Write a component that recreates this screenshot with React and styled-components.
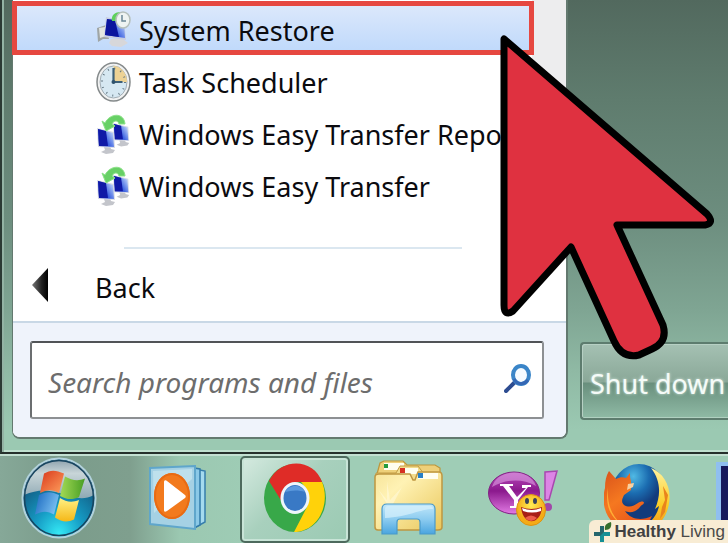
import React from "react";
import styled, { createGlobalStyle, css } from "styled-components";

const GlobalStyle = createGlobalStyle`
  *, *::before, *::after { box-sizing: border-box; }
  body { margin: 0; overflow: hidden; }
  button, input { font: inherit; color: inherit; margin: 0; }
`;

const Desktop = styled.div`
  position: relative;
  display: flex;
  flex-direction: column;
  min-height: 100vh;
  overflow: hidden;
  font-family: "Noto Sans", "Open Sans", sans-serif;
  font-size: 27px;
  color: #0b0b0f;
  background: #9fcdb6;
`;

const StartMenu = styled.main`
  display: flex;
  flex: 1;
  padding: 0 0 13px 10px;
  border-left: 2px solid #2b3a34;
  border-bottom: 2px solid #26302c;
  box-shadow: inset 2px 0 0 #93b3a4, inset 0 -2px 0 #bfe0cf;
  background: linear-gradient(#52695e 0, #5f7c6e 100px, #6d8e7f 220px, #7fa593 310px, #8fb9a4 370px, #9bc9b2 430px);
`;

const Programs = styled.section`
  display: flex;
  flex-direction: column;
  flex: 1;
  min-width: 0;
  border: solid #63796f;
  border-width: 0 2px 2px 1px;
  border-radius: 0 0 8px 8px;
  background: #fff;
  overflow: hidden;
`;

const ListArea = styled.div`
  display: flex;
  justify-content: space-between;
  height: 247px;
`;

const ProgramList = styled.ul`
  display: flex;
  flex-direction: column;
  gap: 2px;
  flex: 1;
  min-width: 0;
  margin: 0;
  padding: 5px 0 0;
  list-style: none;
`;

const ScrollTrack = styled.div`
  width: 34px;
  height: 150px;
  background: #ededee;
`;

const ProgramButton = styled.button`
  display: flex;
  align-items: center;
  gap: 8px;
  width: 100%;
  height: 50px;
  padding: 0 0 0 83px;
  border: 0;
  background: ${(p) => (p.$selected ? "linear-gradient(#dce8fb, #bdd8fb)" : "none")};
  white-space: nowrap;
  text-align: left;
  line-height: 50px;

  svg { flex: none; }
`;

const ProgramName = styled.span`
  padding-top: 2px;
`;

const Separator = styled.hr`
  width: 338px;
  height: 2px;
  margin: 0 0 0 111px;
  border: 0;
  background: #dbe7f0;
`;

const BackButton = styled.button`
  display: flex;
  align-items: center;
  gap: 46px;
  flex: 1;
  padding: 0 0 0 19px;
  border: 0;
  background: none;
  text-align: left;
`;

const BackLabel = styled.span`
  padding-top: 4px;
`;

const SearchFooter = styled.form`
  padding: 18px 22px 18px 17px;
  border-top: 2px solid #c9d8e6;
  background: #eff3fb;
`;

const SearchBox = styled.label`
  display: flex;
  align-items: center;
  height: 78px;
  padding: 0 11px 4px 16px;
  border: 2px solid #8d9093;
  border-top-color: #515457;
  border-left-color: #6b6e70;
  border-radius: 3px;
  background: #fff;
`;

const SearchInput = styled.input`
  flex: 1;
  min-width: 0;
  padding: 8px 0 0;
  border: 0;
  outline: 0;
  background: none;
  font-size: 28px;
  &::placeholder { color: #6d6d6d; font-style: italic; opacity: 1; }
`;

const SidePane = styled.aside`
  display: flex;
  align-items: flex-end;
  width: 160px;
  padding: 0 0 19px 12px;
`;

const ShutDownButton = styled.button`
  flex: 1;
  height: 78px;
  padding: 4px 0 0 8px;
  border: 2px solid #5d7c6e;
  border-right: 0;
  border-radius: 4px 0 0 4px;
  box-shadow: inset 1px 1px 0 #b7d0c4, inset 0 -1px 0 #b0d0c0;
  background: linear-gradient(#a5c1b3 0%, #8aa898 51%, #698f7d 53%, #8fbaa5 100%);
  color: #f5fbf8;
  text-align: left;
  white-space: nowrap;
  text-shadow: 0 0 3px #d7ebe1;
`;

const Taskbar = styled.nav`
  display: flex;
  height: 89px;
  border-top: 2px solid #c3e0d2;
  background: linear-gradient(90deg, #86a898 0, #7b9c8b 60px, #7f9f8e 130px, #9bc8b1 180px, #9fcdb6 260px);
`;

const TaskSlot = styled.button`
  display: flex;
  align-items: center;
  justify-content: center;
  flex: none;
  width: ${(p) => p.$width || 110}px;
  margin: 0 ${(p) => (p.$width ? 0 : 2)}px;
  padding: 0 0 4px;
  border: 2px solid transparent;
  background: none;

  ${(p) => p.$active && css`
    border-color: #4d6a5d;
    border-radius: 5px;
    box-shadow: inset 0 0 0 2px #c8e4d7;
    background: linear-gradient(135deg, #d5eae0 0%, #a8d0bd 45%, #9bcab3 100%);
  `}
`;

const WindowThumb = styled.div`
  flex: 1;
  height: 70px;
  margin: 6px 0 0 22px;
  border: solid #8fbff0;
  border-width: 4px 0 4px 5px;
  background: #17195c;
`;

const Highlight = styled.div`
  position: absolute;
  top: 1px;
  left: 12px;
  right: 194px;
  height: 54px;
  border: 5px solid #e64840;
`;

const Pointer = styled.svg`
  position: absolute;
  top: 30px;
  right: 8px;
`;

const Watermark = styled.div`
  position: absolute;
  right: 0;
  bottom: 0;
  display: flex;
  align-items: center;
  gap: 2px;
  height: 23px;
  padding: 0 3px 0 4px;
  border-radius: 6px 0 0 0;
  background: #f8ecd4;
  color: #4a4a48;
  font: 17px/23px "Liberation Sans", Arial, sans-serif;
  white-space: nowrap;
`;

const Brand = styled.strong`
  font-weight: 700;
  color: #3f4142;
`;

const GradientDefs = styled.svg`
  position: absolute;
`;

const Screen = ({ x, y, s = 1 }) => (
  <g transform={`translate(${x} ${y}) scale(${s})`}>
    <path d="M7 18l6-1 1 3 4 1-2 3-7 1-5-2 4-2z" fill="#c3c5cb" />
    <path d="M0-1L17 3l1 16L1 18z" fill="#d8dbe6" />
    <path d="M1 0l15 4 1 14-15-1z" fill="url(#screenBlue)" />
    <path d="M1 0l8 2 2 15-9 0z" fill="#1019a6" />
  </g>
);

const RestoreIcon = () => (
  <svg width="35" height="38" viewBox="0 0 35 38" aria-hidden="true">
    <path d="M1 17l9-3 3 14-6 0-5 3z" fill="#9fa5a5" />
    <path d="M3 17l6-1 1 9-6 2z" fill="#e3e6e1" />
    <path d="M15 28h12l5 4-7 4-9-1-3-3z" fill="#d7d7da" />
    <path d="M10 6l18 4 2 19-22-3z" fill="#c8cde0" />
    <path d="M11 8l17 3 1 16-20-3z" fill="url(#screenBlue)" />
    <path d="M11 8l8 1 4 17-14-2z" fill="#0b149d" />
    <path d="M16 10c-1-6 3-9 9-9v4c-3 0-5 2-4 5z" fill="#5ed15d" />
    <ellipse cx="27" cy="9" rx="7" ry="8" fill="#eef3f2" stroke="#b5bfbb" strokeWidth="1.5" />
    <path d="M26 4v6h4" fill="none" stroke="#698796" strokeWidth="1.5" />
  </svg>
);

const ClockIcon = () => (
  <svg width="35" height="40" viewBox="0 0 35 40" aria-hidden="true">
    <ellipse cx="17.5" cy="20" rx="16.5" ry="19" fill="#f0f1f1" stroke="#858a8b" strokeWidth="1.5" />
    <ellipse cx="17.5" cy="20" rx="13.5" ry="16" fill="#d6e8f2" stroke="#a2adb4" />
    <path d="M17.5 20V4A13.5 16 0 0 1 31 20z" fill="#edd294" />
    <ellipse cx="17.5" cy="20" rx="11.5" ry="13.5" fill="none" stroke="#667984" strokeWidth="2" strokeDasharray="1 5.6" />
    <path d="M17.5 6v14h9" fill="none" stroke="#3d6078" strokeWidth="2.2" />
    <circle cx="17.5" cy="20" r="2" fill="#2f526c" />
  </svg>
);

const TransferIcon = () => (
  <svg width="35" height="40" viewBox="0 0 35 40" aria-hidden="true">
    <Screen x="17" y="10" s="0.9" />
    <Screen x="1" y="15" />
    <path d="M6 7l3 2C14-1 28-2 29 10l-6 0c-1-4-5-4-7 0l3 2-9 5z" fill="#68d066" stroke="#8be187" strokeWidth="1" />
  </svg>
);

const BackArrow = () => (
  <svg width="17" height="35" viewBox="0 0 17 35" aria-hidden="true">
    <defs>
      <linearGradient id="arrow" x1="0" x2="1">
        <stop stopColor="#777" /><stop offset="0.6" stopColor="#222" /><stop offset="1" stopColor="#000" />
      </linearGradient>
    </defs>
    <path d="M16 0v34L0 17z" fill="url(#arrow)" />
  </svg>
);

const SearchIcon = () => (
  <svg width="27" height="29" viewBox="0 0 27 29" aria-hidden="true">
    <path d="M11 18L2 27" stroke="#2d4c91" strokeWidth="4" strokeLinecap="round" />
    <ellipse cx="17" cy="11" rx="8" ry="9" fill="#f4faff" stroke="#3a85c8" strokeWidth="4" />
    <path d="M10 15c3 6 10 6 14 1" stroke="#3567b5" strokeWidth="3" fill="none" />
  </svg>
);

const SharedGradients = () => (
  <GradientDefs width="0" height="0" aria-hidden="true">
    <defs>
      <linearGradient id="screenBlue" x1="0" y1="1" x2="1" y2="0.3">
        <stop stopColor="#1421b5" /><stop offset="0.5" stopColor="#3a5fe0" /><stop offset="1" stopColor="#b9d0fa" />
      </linearGradient>
    </defs>
  </GradientDefs>
);

const StartOrb = () => (
  <svg width="76" height="82" viewBox="0 0 76 84" preserveAspectRatio="none" aria-hidden="true">
    <defs>
      <radialGradient id="orb" cx="0.5" cy="0.95" r="0.75">
        <stop stopColor="#35e9f5" /><stop offset="0.45" stopColor="#159bc4" /><stop offset="1" stopColor="#12577e" />
      </radialGradient>
      <linearGradient id="orbTop" x2="0" y2="1">
        <stop stopColor="#8fa3ae" /><stop offset="0.35" stopColor="#c8d5d8" /><stop offset="1" stopColor="#8fa9b4" />
      </linearGradient>
      <linearGradient id="flagR" x2="1" y2="1"><stop stopColor="#d8371b" /><stop offset="1" stopColor="#ffa15e" /></linearGradient>
      <linearGradient id="flagG" x2="1"><stop stopColor="#a4da55" /><stop offset="1" stopColor="#489e24" /></linearGradient>
      <linearGradient id="flagB" x2="1" y2="0.4"><stop stopColor="#1765bd" /><stop offset="1" stopColor="#76bdf0" /></linearGradient>
      <linearGradient id="flagY" x2="0" y2="1"><stop stopColor="#fff184" /><stop offset="1" stopColor="#f5b717" /></linearGradient>
    </defs>
    <ellipse cx="38" cy="42" rx="36.5" ry="40.5" fill="url(#orb)" stroke="#b2d2dc" strokeWidth="2" />
    <path d="M3 39C5 17 19 3 38 3s33 14 35 36c-13 7-22 1-34-2-13-4-23-4-36 2z" fill="url(#orbTop)" />
    <ellipse cx="38" cy="42" rx="34.5" ry="38.5" fill="none" stroke="#17445f" strokeWidth="1.5" />
    <path d="M23 17c6-4 12-4 20 0l-5 20c-6-4-12-4-19 0z" fill="url(#flagR)" />
    <path d="M44 20c7 4 13 5 20 2l-6 19c-6 3-12 3-19-1z" fill="url(#flagG)" />
    <path d="M18 39c7-4 13-4 20 0l-5 20c-6-4-12-4-19 0z" fill="url(#flagB)" />
    <path d="M39 42c6 4 12 5 19 2l-5 20c-6 3-12 3-19-2z" fill="url(#flagY)" />
  </svg>
);

const MediaIcon = () => (
  <svg width="58" height="66" viewBox="0 0 58 66" aria-hidden="true">
    <path d="M46 4l10 2v51l-9 5z" fill="#a5daef" stroke="#377eac" strokeWidth="1.5" />
    <path d="M45 3l6 1v56l-6 3z" fill="#8bc9e7" stroke="#327ba9" strokeWidth="1.5" />
    <path d="M1 3l45-2v63L1 59z" fill="#a5d1e4" stroke="#5fa6cb" strokeWidth="2" />
    <path d="M4 6l39-2v10L5 48z" fill="#c9e7ef" opacity="0.7" />
    <ellipse cx="23" cy="31" rx="18" ry="23" fill="#f27a1d" />
    <ellipse cx="23" cy="31" rx="17" ry="22" fill="none" stroke="#e86b13" strokeWidth="2" />
    <path d="M15 17c0-2 2-2 3-1l18 14c1 1 1 2 0 3L18 46c-2 1-3 1-3-1z" fill="#fff" />
  </svg>
);

const ChromeIcon = () => (
  <svg width="62" height="70" viewBox="0 0 62 70" aria-hidden="true">
    <ellipse cx="31" cy="35" rx="31" ry="34" fill="#38a849" />
    <path d="M5 18C17-6 50-5 58 19H31L18 39z" fill="#df2c27" />
    <path d="M58 19c9 22-4 50-28 50l13-25c3-8 1-18-6-25z" fill="#ffd20a" />
    <ellipse cx="31" cy="35" rx="14.5" ry="16" fill="#eef5fa" />
    <ellipse cx="31" cy="35" rx="11.5" ry="13" fill="#3979c5" />
    <path d="M21 29c4-7 15-9 20 0-6-2-13-2-20 0z" fill="#5c9ade" />
  </svg>
);

const ExplorerIcon = () => (
  <svg width="70" height="76" viewBox="0 0 70 76" aria-hidden="true">
    <defs>
      <linearGradient id="folder" x2="1" y2="1"><stop stopColor="#f7e49a" /><stop offset="0.3" stopColor="#fff2b4" /><stop offset="1" stopColor="#e9c75b" /></linearGradient>
      <linearGradient id="stand" x2="0" y2="1"><stop stopColor="#c2e8fa" /><stop offset="0.5" stopColor="#8dccf0" /><stop offset="1" stopColor="#4aa5df" /></linearGradient>
    </defs>
    <path d="M3 14l3-11 4-2h19l4 4h28l5 3v16H3z" fill="#eed079" stroke="#bd963b" strokeWidth="1.2" />
    <path d="M10 3h20v7H10z" fill="#fffef0" /><path d="M10 4h4v4h-4z" fill="#269b3e" />
    <path d="M2 13h20l4-7h18l6 8h17v13H2z" fill="#f2dc8c" stroke="#c29d46" strokeWidth="1" />
    <path d="M27 8h17v6H26z" fill="#fffef0" /><path d="M26 8h5v5h-5z" fill="#d62f22" />
    <path d="M1 17c0-2 2-3 4-3h31l3 6h2l3-8h21c2 0 3 2 3 4v51c0 2-2 3-4 3H4c-2 0-3-1-3-3z" fill="url(#folder)" stroke="#bf9640" strokeWidth="1.5" />
    <path d="M45 13h19v6H44z" fill="#fffef0" /><path d="M44 13h5v5h-5z" fill="#287fc6" />
    <path d="M13 44l-9-15 9 11V21l3 19 12-13-9 17 18-1-18 5z" fill="#fffce1" opacity="0.5" />
    <path d="M8 49c0-3 2-5 5-5h43c3 0 5 2 5 5v25H46V62c0-2-1-3-3-3H26c-2 0-3 1-3 3v12H8z" fill="url(#stand)" stroke="#4899ca" strokeWidth="1.2" />
    <path d="M11 49c0-2 1-3 3-3h41c3 0 4 1 4 3-13 0-25 8-48 9z" fill="#d7f1fc" opacity="0.7" />
  </svg>
);

const MessengerIcon = () => (
  <svg width="70" height="58" viewBox="0 0 70 58" aria-hidden="true">
    <defs>
      <linearGradient id="purple" x2="0" y2="1"><stop stopColor="#b84abb" /><stop offset="0.45" stopColor="#8b198d" /><stop offset="1" stopColor="#e27be4" /></linearGradient>
      <radialGradient id="smile" cy="0.35"><stop stopColor="#ffed55" /><stop offset="1" stopColor="#f4ab17" /></radialGradient>
    </defs>
    <ellipse cx="26" cy="24" rx="25.5" ry="21" fill="url(#purple)" stroke="#812483" />
    <path d="M4 18C9-1 42-1 48 17 34 9 18 10 4 18z" fill="#dda0e3" opacity="0.6" />
    <path d="M12 15h13v2h-4l8 11 9-9h-4v-3h9v2h-3L30 31v6h5v2H22v-2h4v-6L15 17h-3z" fill="#fff" />
    <path d="M57 3l12-1-8 29h-4z" fill="#dc85e5" stroke="#a848af" strokeWidth="1.5" />
    <ellipse cx="60" cy="38" rx="4" ry="4" fill="#a147a8" />
    <ellipse cx="43" cy="41" rx="14.5" ry="15.5" fill="url(#smile)" stroke="#dc9413" />
    <ellipse cx="39" cy="32" rx="2" ry="3" fill="#384259" /><ellipse cx="47" cy="32" rx="2" ry="3" fill="#384259" />
    <path d="M33 38q10 4 21 0c-1 18-19 20-21 0z" fill="#a81f17" />
    <path d="M34 39q10 4 19 0v3q-9 3-18 0z" fill="#fff" />
    <path d="M37 49q6-5 12 0-6 6-12 0z" fill="#ed5c49" />
  </svg>
);

const FirefoxIcon = () => (
  <svg width="66" height="70" viewBox="0 0 66 70" aria-hidden="true">
    <defs>
      <radialGradient id="globe" cx="0.4" cy="0.2"><stop stopColor="#50b9e4" /><stop offset="0.55" stopColor="#1b6cb0" /><stop offset="1" stopColor="#133b7c" /></radialGradient>
      <linearGradient id="fox" x2="0.6" y2="1"><stop stopColor="#d8531b" /><stop offset="0.5" stopColor="#f57820" /><stop offset="1" stopColor="#e8541a" /></linearGradient>
      <linearGradient id="tail" x2="0" y2="1"><stop stopColor="#fff3a0" /><stop offset="0.6" stopColor="#fbcb22" /><stop offset="1" stopColor="#ef861b" /></linearGradient>
    </defs>
    <ellipse cx="35" cy="32" rx="28" ry="31" fill="url(#globe)" />
    <path d="M47 5c15 6 22 23 17 40-4 15-16 24-31 24 12-8 20-15 22-26l-4 3c6-14 6-28-4-41z" fill="url(#tail)" />
    <path d="M59 23l5 9-3 17-5 7 2-12 3-7z" fill="#e9841c" />
    <path d="M5 8l7 8c4-2 7-2 10-1l4-5c0 4 0 6 1 8v9l-7 5c-3 6-2 8 0 10 5 3 10 1 14-2 3-2 6-2 6 0-1 2-3 2-4 4-5 6-11 6-15 4 6 9 17 10 27 5-4 9-11 13-20 13C8 68-5 47 1 25c0-7 1-12 4-17z" fill="url(#fox)" />
    <path d="M24 21l6-1-1 4-6 3z" fill="#f8d0a0" />
    <path d="M4 24c-3 17 1 29 14 38C6 51 3 39 4 24z" fill="#ffad35" />
  </svg>
);

const PlusLeaf = () => (
  <svg width="19" height="20" viewBox="0 0 19 20" aria-hidden="true">
    <path d="M7 4h4v6h6v4h-6v6H7v-6H1v-4h6z" fill="#158f95" />
    <path d="M7 4h4v6l-4 4H1v-4h6z" fill="#25666c" />
    <path d="M12 8c-1-5 2-7 6-8 1 5-1 8-6 8z" fill="#356e2b" />
  </svg>
);

const programs = [
  { name: "System Restore", Icon: RestoreIcon, selected: true },
  { name: "Task Scheduler", Icon: ClockIcon },
  { name: "Windows Easy Transfer Repo", Icon: TransferIcon },
  { name: "Windows Easy Transfer", Icon: TransferIcon },
];

const tasks = [
  { name: "Start", Icon: StartOrb, width: 118 },
  { name: "Media Player", Icon: MediaIcon, width: 120 },
  { name: "Chrome", Icon: ChromeIcon, active: true },
  { name: "Explorer", Icon: ExplorerIcon },
  { name: "Messenger", Icon: MessengerIcon },
  { name: "Firefox", Icon: FirefoxIcon },
];

export default function App() {
  return (
    <Desktop>
      <GlobalStyle />
      <SharedGradients />
      <StartMenu>
        <Programs>
          <ListArea>
            <ProgramList>
              {programs.map(({ name, Icon, selected }) => (
                <li key={name}>
                  <ProgramButton type="button" $selected={selected}>
                    <Icon />
                    <ProgramName>{name}</ProgramName>
                  </ProgramButton>
                </li>
              ))}
            </ProgramList>
            <ScrollTrack />
          </ListArea>
          <Separator />
          <BackButton type="button">
            <BackArrow />
            <BackLabel>Back</BackLabel>
          </BackButton>
          <SearchFooter>
            <SearchBox>
              <SearchInput type="text" aria-label="Search programs and files" placeholder="Search programs and files" />
              <SearchIcon />
            </SearchBox>
          </SearchFooter>
        </Programs>
        <SidePane>
          <ShutDownButton type="button">Shut down</ShutDownButton>
        </SidePane>
      </StartMenu>
      <Taskbar>
        {tasks.map(({ name, Icon, active, width }) => (
          <TaskSlot key={name} type="button" aria-label={name} $active={active} $width={width}>
            <Icon />
          </TaskSlot>
        ))}
        <WindowThumb />
      </Taskbar>
      <Highlight />
      <Pointer width="228" height="332" viewBox="0 0 228 332" aria-hidden="true">
        <path
          d="M12 9V275Q12 287 21 281L79 217L122 311Q130 329 147 325L160 319Q176 312 171 295L125 195H213Q223 193 215 184Z"
          fill="#df3140"
          stroke="#000"
          strokeWidth="7"
          strokeLinejoin="round"
        />
      </Pointer>
      <Watermark>
        <PlusLeaf />
        <span><Brand>Healthy</Brand> Living</span>
      </Watermark>
    </Desktop>
  );
}
